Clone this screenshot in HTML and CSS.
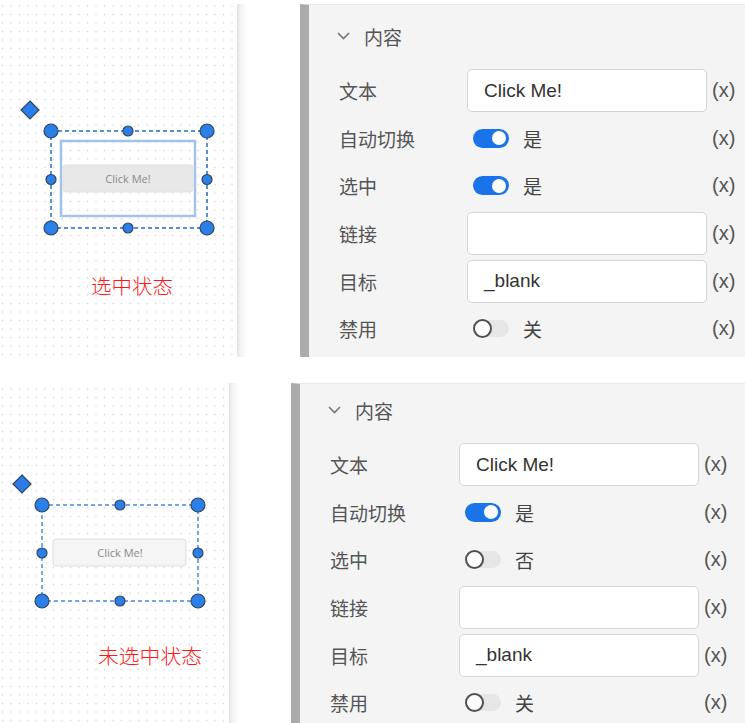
FILE: index.html
```html
<!DOCTYPE html>
<html lang="zh">
<head>
<meta charset="utf-8">
<title>选中状态</title>
<link rel="stylesheet" href="styles.css">
</head>
<body>
<div class="page">
  <section class="section">
    <div class="canvas">
      <svg class="diagram" width="237" height="353" viewBox="0 0 237 353">
        <polygon class="diamond" points="30,97 39,106 30,115 21,106"/>
        <rect class="sel" x="51" y="127" width="156" height="97"/>
        <rect class="inner" x="61" y="137" width="134" height="75"/>
        <rect class="btn btn--hover" x="63" y="161" width="130" height="27" rx="3"/>
        <text class="btn-text" x="128" y="178.5">Click Me!</text>
        <circle class="h" cx="51" cy="127" r="7"/>
        <circle class="h" cx="207" cy="127" r="7"/>
        <circle class="h" cx="51" cy="224" r="7"/>
        <circle class="h" cx="207" cy="224" r="7"/>
        <circle class="h" cx="128" cy="127" r="5"/>
        <circle class="h" cx="128" cy="224" r="5"/>
        <circle class="h" cx="51" cy="175.5" r="5"/>
        <circle class="h" cx="207" cy="175.5" r="5"/>
      </svg>
      <span class="caption caption--a">选中状态</span>
    </div>
    <div class="edge"></div>
    <div class="panel">
      <div class="head">
        <svg class="chev" width="13" height="8" viewBox="0 0 13 8"><polyline points="1,1 6.5,6.5 12,1"/></svg>
        <span>内容</span>
      </div>
      <div class="grid">
        <div class="label">文本</div>
        <div class="input">Click Me!</div>
        <div class="x">(x)</div>

        <div class="label">自动切换</div>
        <div class="sw-wrap"><span class="switch"><span class="knob"></span></span><span class="sw-text">是</span></div>
        <div class="x">(x)</div>

        <div class="label">选中</div>
        <div class="sw-wrap"><span class="switch"><span class="knob"></span></span><span class="sw-text">是</span></div>
        <div class="x">(x)</div>

        <div class="label">链接</div>
        <div class="input"></div>
        <div class="x">(x)</div>

        <div class="label">目标</div>
        <div class="input">_blank</div>
        <div class="x">(x)</div>

        <div class="label">禁用</div>
        <div class="sw-wrap"><span class="switch switch--off"><span class="knob"></span></span><span class="sw-text">关</span></div>
        <div class="x">(x)</div>
      </div>
    </div>
  </section>

  <section class="section section--b">
    <div class="canvas canvas--b">
      <svg class="diagram" width="229" height="340" viewBox="0 0 229 340">
        <polygon class="diamond" points="22,92 31,101 22,110 13,101"/>
        <rect class="sel sel--light" x="42" y="122" width="156" height="96"/>
        <rect class="btn" x="53" y="156" width="133" height="27" rx="3"/>
        <text class="btn-text" x="120" y="173.5">Click Me!</text>
        <circle class="h" cx="42" cy="122" r="7"/>
        <circle class="h" cx="198" cy="122" r="7"/>
        <circle class="h" cx="42" cy="218" r="7"/>
        <circle class="h" cx="198" cy="218" r="7"/>
        <circle class="h" cx="120" cy="122" r="5"/>
        <circle class="h" cx="120" cy="218" r="5"/>
        <circle class="h" cx="42" cy="170" r="5"/>
        <circle class="h" cx="198" cy="170" r="5"/>
      </svg>
      <span class="caption caption--b">未选中状态</span>
    </div>
    <div class="edge"></div>
    <div class="panel panel--b">
      <div class="head">
        <svg class="chev" width="13" height="8" viewBox="0 0 13 8"><polyline points="1,1 6.5,6.5 12,1"/></svg>
        <span>内容</span>
      </div>
      <div class="grid">
        <div class="label">文本</div>
        <div class="input">Click Me!</div>
        <div class="x">(x)</div>

        <div class="label">自动切换</div>
        <div class="sw-wrap"><span class="switch"><span class="knob"></span></span><span class="sw-text">是</span></div>
        <div class="x">(x)</div>

        <div class="label">选中</div>
        <div class="sw-wrap"><span class="switch switch--off"><span class="knob"></span></span><span class="sw-text">否</span></div>
        <div class="x">(x)</div>

        <div class="label">链接</div>
        <div class="input"></div>
        <div class="x">(x)</div>

        <div class="label">目标</div>
        <div class="input">_blank</div>
        <div class="x">(x)</div>

        <div class="label">禁用</div>
        <div class="sw-wrap"><span class="switch switch--off"><span class="knob"></span></span><span class="sw-text">关</span></div>
        <div class="x">(x)</div>
      </div>
    </div>
  </section>
</div>
</body>
</html>
```
FILE: styles.css
```css
html, body {
  margin: 0;
  background: #fff;
}
body {
  font-family: "Liberation Sans", "Noto Sans CJK SC", sans-serif;
  overflow: hidden;
}
.page {
  padding-top: 4px;
  display: flex;
  flex-direction: column;
  gap: 26px;
}
.section {
  display: flex;
  height: 353px;
}
.section--b {
  height: 340px;
}
.canvas {
  position: relative;
  width: 237px;
  flex: none;
  background-color: #fff;
  background-image: radial-gradient(circle, #d9d9d9 0.6px, rgba(255,255,255,0) 1.1px);
  background-size: 8.5px 8.5px;
  background-position: 6.75px -2.25px;
}
.canvas--b {
  width: 229px;
  background-position: 6.75px 1.75px;
}
.diagram {
  display: block;
}
.diamond {
  fill: #2b7de9;
  stroke: #34465e;
  stroke-width: 1.2;
}
.sel {
  fill: none;
  stroke: #1f6cd0;
  stroke-width: 1.5;
  stroke-dasharray: 4 3;
}
.sel--light {
  stroke: #4b8bd9;
}
.inner {
  fill: none;
  stroke: #a4c3ea;
  stroke-width: 2.5;
}
.btn {
  fill: #f5f5f5;
  stroke: #dddddd;
  stroke-width: 1;
}
.btn--hover {
  fill: #e8e8e8;
  stroke: #e2e2e2;
}
.btn-text {
  font-family: "Open Sans", "Liberation Sans", sans-serif;
  font-size: 11px;
  fill: #8a8a8a;
  text-anchor: middle;
}
.h {
  fill: #2a7fe8;
  stroke: #34465e;
  stroke-width: 1.2;
}
.caption {
  position: absolute;
  font-family: "Noto Sans CJK SC", sans-serif;
  font-weight: 300;
  font-size: 20.5px;
  line-height: 24px;
  color: #ff1a1a;
  white-space: nowrap;
}
.caption--a {
  left: 91px;
  top: 269px;
}
.caption--b {
  left: 98px;
  top: 260px;
  font-size: 20.8px;
}
.edge {
  width: 10px;
  flex: none;
  background: linear-gradient(to right, #e2e2e2, #f3f3f3 35%, #fff);
}
.panel {
  flex: 1;
  min-width: 0;
  margin-left: 53px;
  border-left: 9px solid #ababab;
  border-top: 1px solid #e9e9e9;
  background: #f4f4f4;
  padding: 19px 0 0 30px;
}
.panel--b {
  margin-left: 52px;
  padding-top: 14px;
}
.panel--b .grid {
  grid-template-columns: 124px 240px 28px;
}
.head {
  display: flex;
  align-items: center;
  gap: 14px;
  height: 24px;
  color: #555;
  font-size: 19px;
}
.chev {
  margin-left: -2px;
  display: block;
}
.chev polyline {
  fill: none;
  stroke: #777;
  stroke-width: 1.6;
}
.grid {
  margin-top: 21px;
  display: grid;
  grid-template-columns: 123px 240px 28px;
  justify-content: start;
  grid-auto-rows: 43px;
  row-gap: 4.65px;
  column-gap: 5px;
  align-items: center;
}
.label {
  color: #555;
  font-size: 19px;
  white-space: nowrap;
}
.input {
  height: 43px;
  box-sizing: border-box;
  border: 1px solid #d5d5d5;
  border-radius: 5px;
  background: #fff;
  padding-left: 16px;
  display: flex;
  align-items: center;
  font-size: 19px;
  color: #333;
}
.x {
  font-size: 20px;
  color: #555;
  white-space: nowrap;
}
.sw-wrap {
  display: flex;
  align-items: center;
  gap: 14px;
  padding-left: 6px;
}
.switch {
  width: 36px;
  height: 19px;
  box-sizing: border-box;
  border-radius: 10px;
  background: #1a73e8;
  display: flex;
  align-items: center;
  justify-content: flex-end;
  padding: 0 3px;
}
.knob {
  width: 14px;
  height: 14px;
  border-radius: 50%;
  background: #fff;
  flex: none;
}
.switch--off {
  height: 17px;
  background: #e6e6e6;
  justify-content: flex-start;
  padding: 0;
}
.switch--off .knob {
  width: 19px;
  height: 19px;
  box-sizing: border-box;
  border: 2px solid #505050;
}
.sw-text {
  font-size: 19px;
  color: #444;
}
```
